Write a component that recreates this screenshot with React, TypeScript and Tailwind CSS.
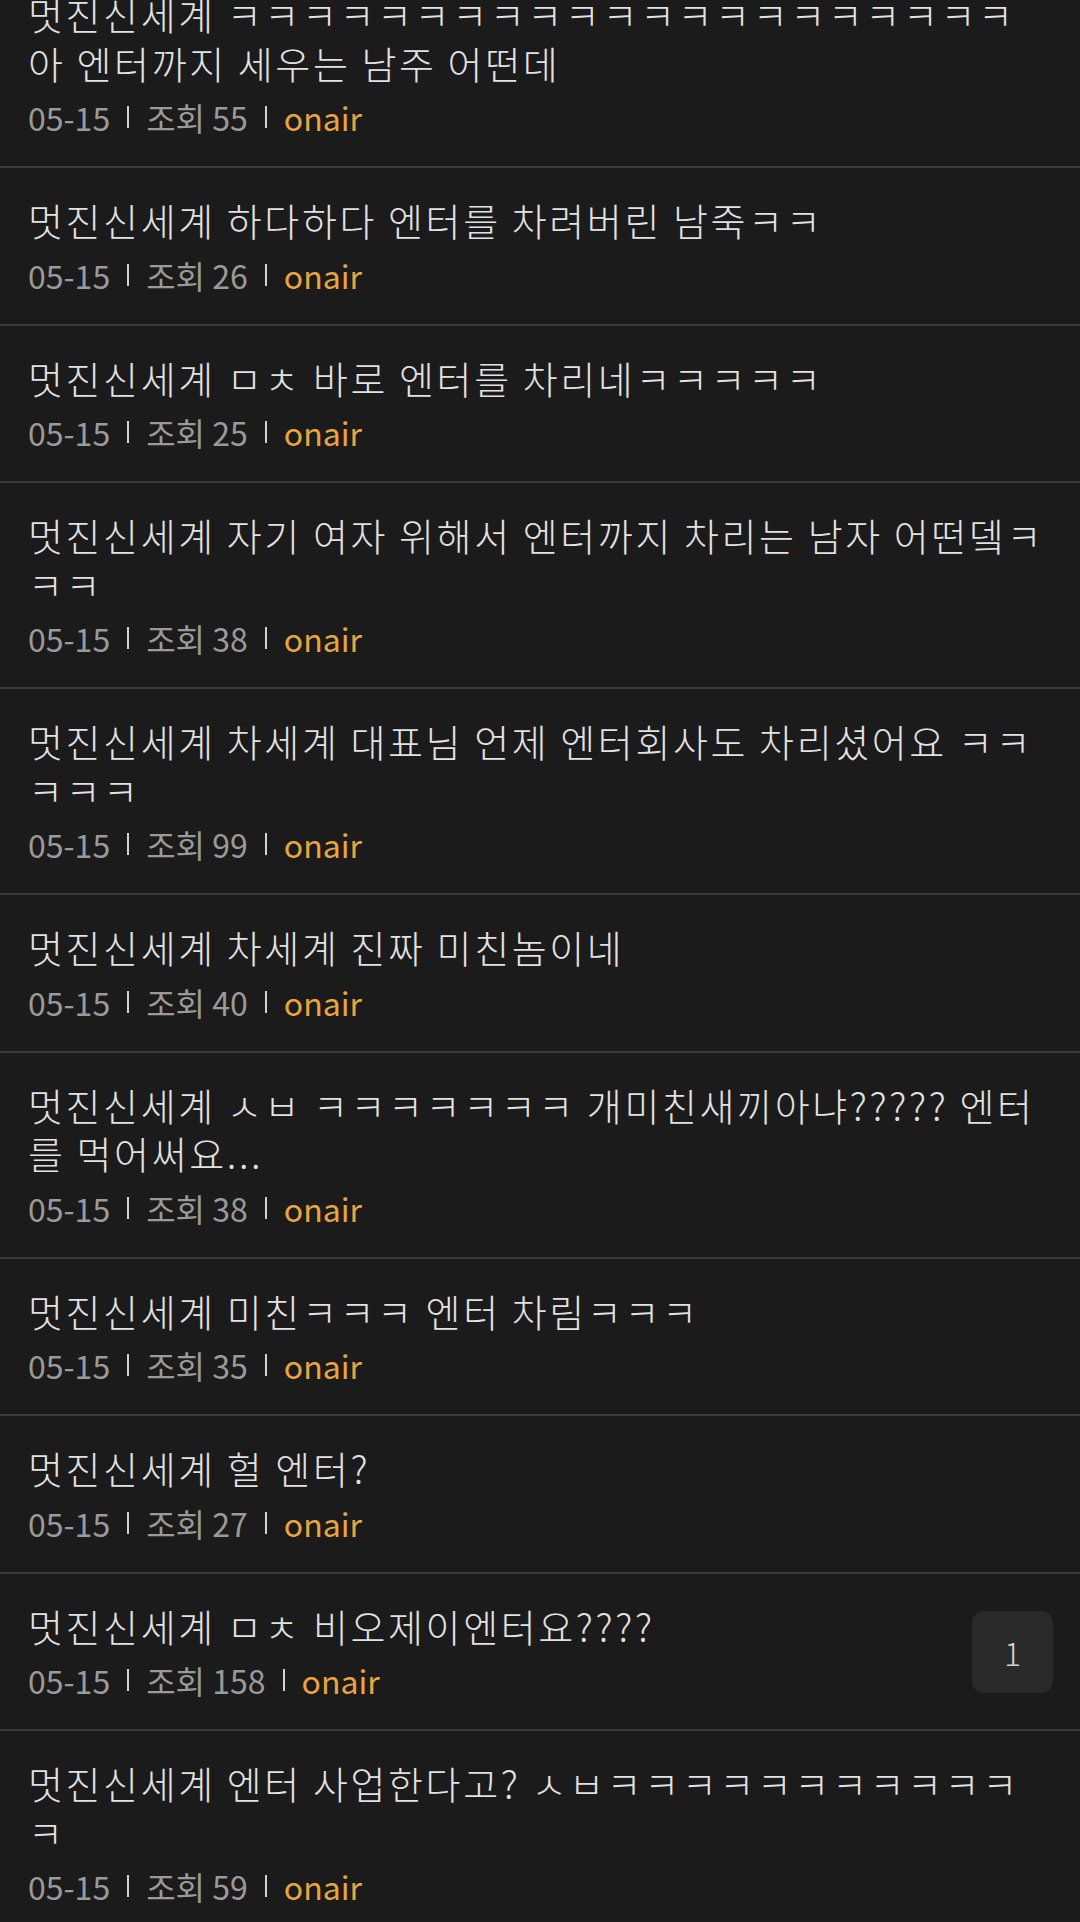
import React from "react";

type Post = { title: string; views: number; badge?: number };

const posts: Post[] = [
  { title: "멋진신세계 " + "ㅋ".repeat(21) + "아 엔터까지 세우는 남주 어떤데", views: 55 },
  { title: "멋진신세계 하다하다 엔터를 차려버린 남죽ㅋㅋ", views: 26 },
  { title: "멋진신세계 ㅁㅊ 바로 엔터를 차리네ㅋㅋㅋㅋㅋ", views: 25 },
  { title: "멋진신세계 자기 여자 위해서 엔터까지 차리는 남자 어떤뎈ㅋㅋㅋ", views: 38 },
  { title: "멋진신세계 차세계 대표님 언제 엔터회사도 차리셨어요 ㅋㅋㅋㅋㅋ", views: 99 },
  { title: "멋진신세계 차세계 진짜 미친놈이네", views: 40 },
  { title: "멋진신세계 ㅅㅂ ㅋㅋㅋㅋㅋㅋㅋ 개미친새끼아냐????? 엔터를 먹어써요...", views: 38 },
  { title: "멋진신세계 미친ㅋㅋㅋ 엔터 차림ㅋㅋㅋ", views: 35 },
  { title: "멋진신세계 헐 엔터?", views: 27 },
  { title: "멋진신세계 ㅁㅊ 비오제이엔터요????", views: 158, badge: 1 },
  { title: "멋진신세계 엔터 사업한다고? ㅅㅂ" + "ㅋ".repeat(12), views: 59 },
];

function Bar() {
  return <span className="inline-block w-[2px] h-[22px] bg-[#d2d2d2]" />;
}

export default function App() {
  return (
    <div
      className="w-[1080px] h-[1922px] overflow-hidden bg-[#1b1b1b]"
      style={{ fontFamily: '"Noto Sans CJK KR", "Noto Sans", sans-serif' }}
    >
      <div className="-mt-[38px] flex flex-col">
        {posts.map((p, i) => (
          <div
            key={i}
            className="flex items-center gap-6 pl-[28px] pr-[30px] pt-[28px] pb-[27px] border-b-2 border-[#3b3b3b]"
          >
            <div className="flex-1 min-w-0">
              <div className="text-[38px] tracking-[2.6px] leading-[48.5px] font-light text-[#e2e2e2]">
                {p.title}
              </div>
              <div className="mt-2 flex items-center gap-[17px] text-[32px] leading-[44px] font-normal text-[#9a9a9a]">
                <span>05-15</span>
                <Bar />
                <span>조회 {p.views}</span>
                <Bar />
                <span className="text-[#e9a53e]">onair</span>
              </div>
            </div>
            {p.badge !== undefined && (
              <div className="-mr-[3px] w-[81px] h-[82px] rounded-[12px] bg-[#2a2a2a] flex items-center justify-center text-[32px] font-light text-[#d4d4d4]">
                {p.badge}
              </div>
            )}
          </div>
        ))}
      </div>
    </div>
  );
}
